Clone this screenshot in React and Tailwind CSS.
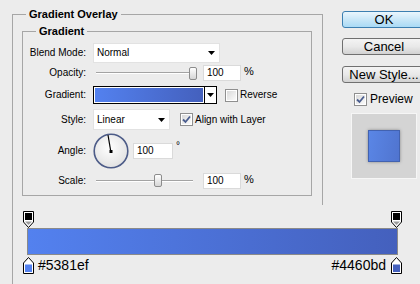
import React from "react"

const GRAD_FROM = "#5381ef"
const GRAD_TO = "#4460bd"

function Arrow() {
  return (
    <svg width="7" height="4" viewBox="0 0 7 4">
      <path d="M0 0 H7 L3.5 4 Z" fill="#000" />
    </svg>
  )
}

function Checkbox({ checked }) {
  return (
    <div className="w-[13px] h-[13px] shrink-0 border border-[#8f8f8f] bg-white p-[1px]">
      <div className="w-full h-full bg-linear-to-br from-[#d9d9d9] to-[#fbfbfb] flex items-center justify-center">
        {checked && (
          <svg width="9" height="9" viewBox="0 0 9 9">
            <path d="M1 4.5 L3.5 7 L8 1.5" fill="none" stroke="#4a5d8e" strokeWidth="1.8" />
          </svg>
        )}
      </div>
    </div>
  )
}

function Select({ value, width }) {
  return (
    <div
      className={`${width} h-full bg-white border border-[#e2e2e2] flex items-center justify-between pl-[3px] pr-[4px]`}
    >
      <span>{value}</span>
      <Arrow />
    </div>
  )
}

function Slider({ left, right }) {
  return (
    <div className="w-[104px] h-full flex items-center pl-[3px]">
      <div className="h-[2px] border-t border-[#a3a3a3] bg-white" style={{ width: left }} />
      <div className="w-[8px] h-[13px] shrink-0 rounded-[2px] border border-[#8c8c8c] bg-linear-to-b from-white to-[#d6d6d6]" />
      {right > 0 && <div className="h-[2px] border-t border-[#a3a3a3] bg-white" style={{ width: right }} />}
    </div>
  )
}

function NumberBox({ value, width = "w-[38px]" }) {
  return (
    <div className={`${width} h-[16px] bg-white border border-[#dadada] flex items-center pl-[3px]`}>
      {value}
    </div>
  )
}

function Row({ label, height, mt, children }) {
  return (
    <div className={`flex items-center ${height} ${mt}`}>
      <div className="w-[64px] text-right pr-[1px] shrink-0">{label}</div>
      <div className="ml-[6px] flex items-center h-full">{children}</div>
    </div>
  )
}

function Dial() {
  return (
    <svg width="36" height="36" viewBox="0 0 36 36">
      <defs>
        <radialGradient id="dialFill" cx="45%" cy="40%" r="60%">
          <stop offset="0%" stopColor="#ffffff" />
          <stop offset="100%" stopColor="#e2e2e2" />
        </radialGradient>
      </defs>
      <circle cx="18" cy="18" r="16.8" fill="url(#dialFill)" stroke="#4d5c88" strokeWidth="1.6" />
      <line x1="17.8" y1="18.5" x2="15" y2="2" stroke="#000" strokeWidth="1.2" />
      <rect x="16.5" y="17" width="3" height="3" fill="#000" />
    </svg>
  )
}

function TopStop() {
  return (
    <svg width="11" height="17" viewBox="0 0 11 17">
      <path d="M0.5 0.5 H10.5 V11 L5.5 16.5 L0.5 11 Z" fill="#fff" stroke="#000" />
      <rect x="2" y="2" width="7" height="7" fill="#000" />
      <path d="M2 10.5 H9 L5.5 14 Z" fill="#9a9a9a" />
    </svg>
  )
}

function BottomStop({ color }) {
  return (
    <svg width="11" height="17" viewBox="0 0 11 17">
      <path d="M5.5 0.5 L10.5 6 V16.5 H0.5 V6 Z" fill="#fff" stroke="#000" />
      <rect x="2" y="7.5" width="7" height="7.5" fill={color} />
    </svg>
  )
}

function Button({ children, primary }) {
  const tone = primary
    ? "border-[#3c7fb1] from-[#eaf6fd] via-[#c9e7f8] to-[#a9daf5]"
    : "border-[#707070] from-[#f4f4f4] via-[#e9e9e9] to-[#d2d2d2]"
  return (
    <div
      className={`w-[84px] h-[17px] shrink-0 rounded-[3px] border bg-linear-to-b ${tone} flex items-center justify-center text-[13px] leading-none`}
    >
      {children}
    </div>
  )
}

export default function App() {
  return (
    <div className="w-[420px] h-[284px] overflow-hidden bg-[#ececec] text-black text-[10px] leading-[12px] font-['Liberation_Sans',Arial,sans-serif]">
      <div className="flex h-[205px]">
        {/* Settings panel */}
        <div className="w-[342px] shrink-0 pl-[12px] pt-[8px]">
          <fieldset className="w-[311px] h-[197px] border border-b-0 border-[#a6a6a6]">
            <legend className="ml-[13px] px-[3px] text-[11px] leading-[13px] font-bold">Gradient Overlay</legend>
            <fieldset className="ml-[9px] mt-[4px] w-[290px] h-[171px] border border-[#a6a6a6]">
              <legend className="ml-[13px] px-[3px] text-[11px] leading-[13px] font-bold">Gradient</legend>

              <Row label="Blend Mode:" height="h-[20px]" mt="mt-[5px]">
                <Select value="Normal" width="w-[127px]" />
              </Row>

              <Row label="Opacity:" height="h-[18px]" mt="mt-[1px]">
                <Slider left={93} right={0} />
                <div className="ml-[6px]">
                  <NumberBox value="100" />
                </div>
                <span className="ml-[3px] -mt-[4px] text-[11px]">%</span>
              </Row>

              <Row label="Gradient:" height="h-[18px]" mt="mt-[4px]">
                <div className="w-[124px] h-full border border-black flex">
                  <div className="flex-1 border border-white">
                    <div
                      className="w-full h-full"
                      style={{ background: `linear-gradient(to right, ${GRAD_FROM}, ${GRAD_TO})` }}
                    />
                  </div>
                  <div className="w-[12px] border-l border-black bg-white flex items-center justify-center">
                    <Arrow />
                  </div>
                </div>
                <div className="ml-[8px] flex items-center">
                  <Checkbox />
                  <span className="ml-[2px]">Reverse</span>
                </div>
              </Row>

              <Row label="Style:" height="h-[21px]" mt="mt-[5px]">
                <Select value="Linear" width="w-[77px]" />
                <div className="ml-[10px] flex items-center">
                  <Checkbox checked />
                  <span className="ml-[2px]">Align with Layer</span>
                </div>
              </Row>

              <Row label="Angle:" height="h-[36px]" mt="mt-[3px]">
                <Dial />
                <div className="ml-[4px]">
                  <NumberBox value="100" width="w-[40px]" />
                </div>
                <span className="ml-[3px] -mt-[10px] text-[10px]">°</span>
              </Row>

              <Row label="Scale:" height="h-[17px]" mt="mt-[3px]">
                <Slider left={58} right={31} />
                <div className="ml-[6px]">
                  <NumberBox value="100" />
                </div>
                <span className="ml-[3px] -mt-[4px] text-[11px]">%</span>
              </Row>
            </fieldset>
          </fieldset>
        </div>

        {/* Buttons and preview */}
        <div className="flex flex-col pt-[11px]">
          <Button primary>OK</Button>
          <div className="mt-[10px]">
            <Button>Cancel</Button>
          </div>
          <div className="mt-[11px]">
            <Button>New Style...</Button>
          </div>
          <div className="mt-[10px] ml-[12px] flex items-center">
            <Checkbox checked />
            <span className="ml-[3px] text-[12px] leading-[13px]">Preview</span>
          </div>
          <div className="mt-[7px] ml-[9px] w-[66px] h-[66px] border border-[#f6f6f6] bg-[#d4d4d4] flex items-center justify-center">
            <div
              className="w-[32px] h-[32px] border border-[#4262b0] shadow-[0_0_3px_rgba(0,0,0,0.35)]"
              style={{ background: "linear-gradient(100deg, #5a86e6, #5074cf)" }}
            />
          </div>
        </div>
      </div>

      {/* Gradient editor */}
      <div className="ml-[12px] h-[79px] border-l border-[#a6a6a6] pt-[6px]">
        <div className="ml-[10px] w-[379px] flex justify-between">
          <TopStop />
          <TopStop />
        </div>
        <div
          className="ml-[14px] w-[371px] h-[27px] border border-[#8a8a8a]"
          style={{ background: `linear-gradient(to right, ${GRAD_FROM}, ${GRAD_TO})` }}
        />
        <div className="ml-[10px] mt-[1px] w-[379px] flex items-center justify-between text-[14px] leading-[17px]">
          <div className="flex items-center">
            <BottomStop color={GRAD_FROM} />
            <span className="ml-[4px] mt-[1px]">#5381ef</span>
          </div>
          <div className="flex items-center">
            <span className="mr-[5px] mt-[1px]">#4460bd</span>
            <BottomStop color={GRAD_TO} />
          </div>
        </div>
      </div>
    </div>
  )
}
